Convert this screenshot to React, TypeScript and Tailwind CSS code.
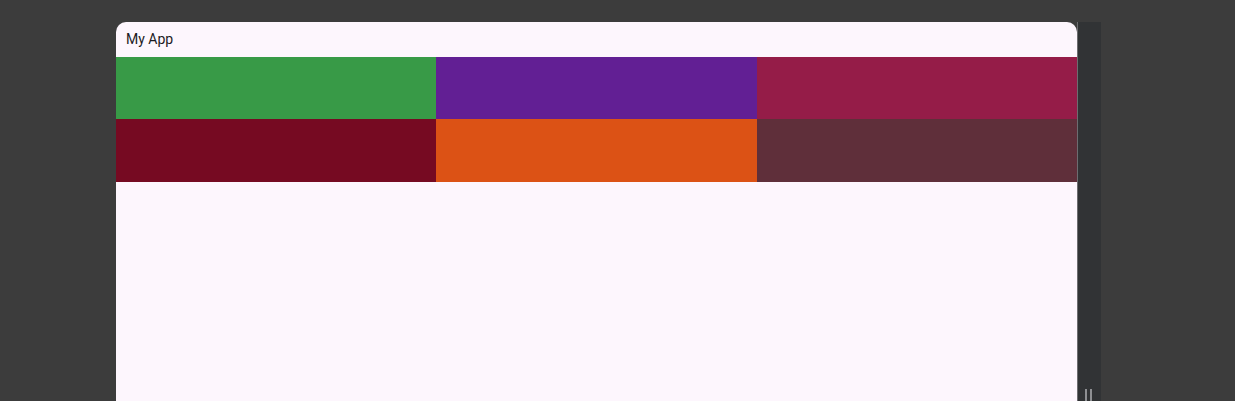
const tiles = [
  'bg-[#389a47]',
  'bg-[#621f94]',
  'bg-[#951c48]',
  'bg-[#760a22]',
  'bg-[#dc5215]',
  'bg-[#5f2f3a]',
];

const App = () => {
  return (
    <div className="h-[401px] w-[1235px] overflow-hidden bg-[#3c3c3c] pt-[22px] pl-[116px] flex">
      {/* App window */}
      <div className="w-[961px] h-[379px] bg-[#fdf6fd] rounded-t-[10px] flex flex-col">
        <div className="h-[35px] flex items-center px-[10px] text-[14px] text-[#1c1b1f] font-['Roboto',sans-serif]">
          My App
        </div>
        <div className="grid grid-cols-3 grid-rows-[62px_63px]">
          {tiles.map((c, i) => (
            <div key={i} className={c} />
          ))}
        </div>
      </div>
      {/* side strip */}
      <div className="w-px h-[379px] bg-[#6d6d70]" />
      <div className="w-[23px] h-[379px] bg-[#313335] flex items-end gap-[3px] pl-[7px]">
        <div className="w-[2px] h-[12px] bg-[#8f9093]" />
        <div className="w-[2px] h-[12px] bg-[#8f9093]" />
      </div>
    </div>
  );
};

export default App;
